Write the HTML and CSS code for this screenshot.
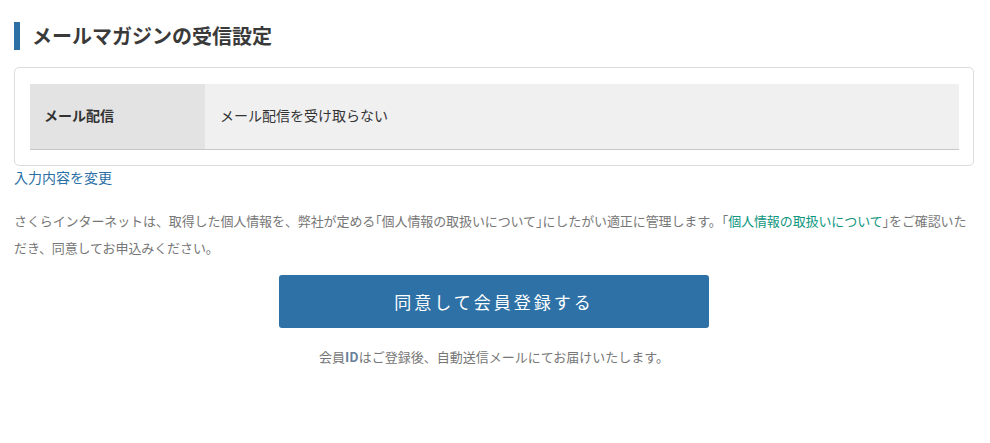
FILE: index.html
```html
<!DOCTYPE html>
<html lang="ja">
<head>
<meta charset="utf-8">
<link rel="stylesheet" href="styles.css">
</head>
<body>
<div class="page">
  <h2 class="title">メールマガジンの受信設定</h2>
  <div class="box">
    <table class="tbl">
      <tr>
        <th>メール配信</th>
        <td>メール配信を受け取らない</td>
      </tr>
    </table>
  </div>
  <a class="edit" href="#">入力内容を変更</a>
  <p class="notice">さくらインターネットは、取得した個人情報を、弊社が定める<span class="br">「</span>個人情報の取扱いについて<span class="br">」</span>にしたがい適正に管理します。<span class="br">「</span><a class="policy" href="#">個人情報の取扱いについて</a><span class="br">」</span>をご確認いただき、同意してお申込みください。</p>
  <div class="actions">
    <button class="submit" type="button">同意して会員登録する</button>
    <p class="note">会員<b class="id">ID</b>はご登録後、自動送信メールにてお届けいたします。</p>
  </div>
</div>
</body>
</html>
```
FILE: styles.css
```css
html, body {
  margin: 0;
  padding: 0;
  background: #fff;
}
body {
  font-family: "Noto Sans CJK JP", "Noto Sans", sans-serif;
  color: #333;
}
.page {
  width: 960px;
  padding: 22px 0 0 14px;
}
.title {
  margin: 0;
  border-left: 6px solid #2d6fa4;
  padding-left: 12px;
  font-size: 20px;
  line-height: 28px;
  font-weight: bold;
  color: #3a3a3a;
}
.box {
  margin-top: 17px;
  border: 1px solid #dcdcdc;
  border-radius: 5px;
  padding: 16px 14px 15px 15px;
}
.tbl {
  width: 100%;
  border-collapse: collapse;
}
.tbl th, .tbl td {
  height: 62px;
  border-bottom: 1px solid #c8c8c8;
  font-size: 14px;
  line-height: 20px;
  vertical-align: middle;
}
.tbl th {
  width: 175px;
  background: #e3e3e3;
  text-align: left;
  padding: 0 0 3px 14px;
  box-sizing: border-box;
  font-weight: bold;
  color: #333;
}
.tbl td {
  background: #f0f0f0;
  padding: 0 0 3px 15px;
  color: #333;
}
.edit {
  display: block;
  margin-top: 1px;
  font-size: 14px;
  line-height: 20px;
  color: #2a6fa5;
  text-decoration: none;
}
.notice {
  margin: 20px 0 0;
  font-size: 13px;
  line-height: 27px;
  letter-spacing: -0.1px;
  color: #777;
}
.br {
  font-feature-settings: "halt";
}
.policy {
  color: #0f9680;
  text-decoration: none;
}
.actions {
  display: flex;
  flex-direction: column;
  align-items: center;
  margin-top: 14px;
}
.submit {
  width: 430px;
  height: 53px;
  border: none;
  border-radius: 3px;
  background: #2d71a6;
  color: #fff;
  font-family: inherit;
  font-size: 17px;
  letter-spacing: 3px;
  cursor: pointer;
}
.note {
  margin: 17px 0 0;
  font-size: 13px;
  line-height: 24px;
  color: #777;
}
.id {
  color: #6a7f9a;
}
```
